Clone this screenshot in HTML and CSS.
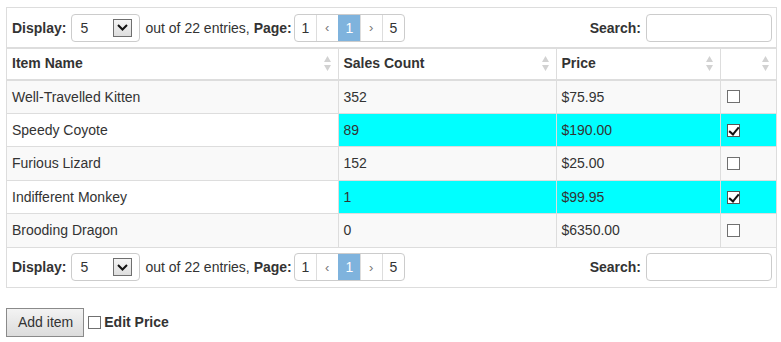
FILE: index.html
```html
<!DOCTYPE html>
<html lang="en">
<head>
  <meta charset="UTF-8">
  <title>Items</title>
  <link rel="stylesheet" href="styles.css">
</head>
<body>
  <div class="grid">
    <div class="toolbar">
      <div class="paging">
        <b>Display:</b>
        <span class="picker">
          <select><option>5</option><option>10</option><option>20</option></select>
          <span class="picker-btn"><svg width="11" height="7" viewBox="0 0 11 7"><path d="M1 1l4.5 4.5L10 1" fill="none" stroke="#111" stroke-width="2"/></svg></span>
        </span>
        <span>out of 22 entries, <b>Page:</b></span>
        <span class="pager"><a>1</a><a class="dim">&lsaquo;</a><a class="on">1</a><a class="dim">&rsaquo;</a><a>5</a></span>
      </div>
      <label class="search"><b>Search:</b><input type="text"></label>
    </div>

    <table>
      <colgroup><col class="c-name"><col class="c-sales"><col class="c-price"><col></colgroup>
      <thead>
        <tr>
          <th><div class="th"><span>Item Name</span><svg class="sort" width="7" height="15" viewBox="0 0 7 15"><path d="M3.5 0L7 6H0z M0 9h7l-3.5 6z" fill="#d2d2d2"/></svg></div></th>
          <th><div class="th"><span>Sales Count</span><svg class="sort" width="7" height="15" viewBox="0 0 7 15"><path d="M3.5 0L7 6H0z M0 9h7l-3.5 6z" fill="#d2d2d2"/></svg></div></th>
          <th><div class="th"><span>Price</span><svg class="sort" width="7" height="15" viewBox="0 0 7 15"><path d="M3.5 0L7 6H0z M0 9h7l-3.5 6z" fill="#d2d2d2"/></svg></div></th>
          <th><div class="th"><span></span><svg class="sort" width="7" height="15" viewBox="0 0 7 15"><path d="M3.5 0L7 6H0z M0 9h7l-3.5 6z" fill="#d2d2d2"/></svg></div></th>
        </tr>
      </thead>
      <tbody>
        <tr class="odd"><td>Well-Travelled Kitten</td><td>352</td><td>$75.95</td><td><input type="checkbox" class="tick"></td></tr>
        <tr class="sel"><td>Speedy Coyote</td><td>89</td><td>$190.00</td><td><input type="checkbox" class="tick" checked></td></tr>
        <tr class="odd"><td>Furious Lizard</td><td>152</td><td>$25.00</td><td><input type="checkbox" class="tick"></td></tr>
        <tr class="sel"><td>Indifferent Monkey</td><td>1</td><td>$99.95</td><td><input type="checkbox" class="tick" checked></td></tr>
        <tr class="odd"><td>Brooding Dragon</td><td>0</td><td>$6350.00</td><td><input type="checkbox" class="tick"></td></tr>
      </tbody>
    </table>

    <div class="toolbar bottom">
      <div class="paging">
        <b>Display:</b>
        <span class="picker">
          <select><option>5</option><option>10</option><option>20</option></select>
          <span class="picker-btn"><svg width="11" height="7" viewBox="0 0 11 7"><path d="M1 1l4.5 4.5L10 1" fill="none" stroke="#111" stroke-width="2"/></svg></span>
        </span>
        <span>out of 22 entries, <b>Page:</b></span>
        <span class="pager"><a>1</a><a class="dim">&lsaquo;</a><a class="on">1</a><a class="dim">&rsaquo;</a><a>5</a></span>
      </div>
      <label class="search"><b>Search:</b><input type="text"></label>
    </div>
  </div>

  <div class="actions">
    <button class="btn">Add item</button>
    <label class="opt"><input type="checkbox" class="tick"><b>Edit Price</b></label>
  </div>
</body>
</html>
```

FILE: styles.css
```css
* { box-sizing: border-box; }
body { margin: 7px 4px 0 6px; font-family: "Liberation Sans", Arial, sans-serif; font-size: 14px; color: #333; }

.grid { width: 771px; border: 1px solid #ddd; }
.toolbar { display: flex; align-items: center; justify-content: space-between; padding: 5px 4px 5px 5px; height: 39px; }
.toolbar.bottom { border-top: 1px solid #ddd; height: 40px; }
.paging { display: flex; align-items: center; gap: 5px; }

.picker { display: flex; align-items: center; width: 69px; height: 28px; border: 1px solid #ccc; border-radius: 4px; background: #fff; }
.picker select { appearance: none; border: none; background: none; font: inherit; color: #333; padding: 0 0 0 8px; flex: 1; width: 20px; outline: none; }
.picker-btn { display: flex; align-items: center; justify-content: center; width: 19px; height: 18px; margin-right: 7px; border: 1px solid #6f6f6f; background: linear-gradient(#f4f4f4, #dedede); }

.pager { display: flex; height: 28px; border: 1px solid #ccc; border-radius: 4px; overflow: hidden; margin-left: -3px; }
.pager a { width: 22px; display: flex; align-items: center; justify-content: center; border-left: 1px solid #ddd; color: #333; cursor: pointer; }
.pager a:first-child { border-left: none; width: 21px; }
.pager a.dim { color: #777; font-size: 13px; }
.pager a.on { background: #7fb3dd; color: #fff; border-left-color: #7fb3dd; }

.search { display: flex; align-items: center; gap: 5px; }
.search input { width: 126px; height: 28px; border: 1px solid #ccc; border-radius: 4px; font: inherit; padding: 0 6px; }

table { width: 100%; border-collapse: collapse; table-layout: fixed; }
.c-name { width: 331px; }
.c-sales { width: 218px; }
.c-price { width: 164px; }
th, td { text-align: left; padding: 6px 5px; line-height: 20.4px; border-left: 1px solid #ddd; border-top: 1px solid #ddd; }
th:first-child, td:first-child { border-left: none; }
thead th { border-top: 2px solid #ddd; border-bottom: 2px solid #ddd; padding: 5px; line-height: 19.6px; }
.th { display: flex; align-items: center; justify-content: space-between; }
.sort { display: block; margin-right: 2px; }

tr.odd td { background: #f9f9f9; }
tr.sel td { background: #0ff; }
tr.sel td:first-child { background: #fff; }

.tick { appearance: none; display: block; position: relative; width: 13px; height: 13px; margin: 0 0 0 1px; border: 1px solid #707070; background: #fff; }
.tick:checked { border-color: #555; }
.tick:checked::after { content: ""; position: absolute; left: 3px; top: 0; width: 4px; height: 8px; border: solid #111; border-width: 0 2px 2px 0; transform: rotate(40deg); }

.actions { display: flex; align-items: center; margin-top: 20px; }
.btn { height: 29px; padding: 0 10px 0 11px; font: inherit; color: #333; border: 1px solid #8a8a8a; background: linear-gradient(#f3f3f3, #dcdcdc); border-radius: 0; }
.opt { display: flex; align-items: center; gap: 3px; margin-left: 4px; }
.opt .tick { margin: 0; }
```
